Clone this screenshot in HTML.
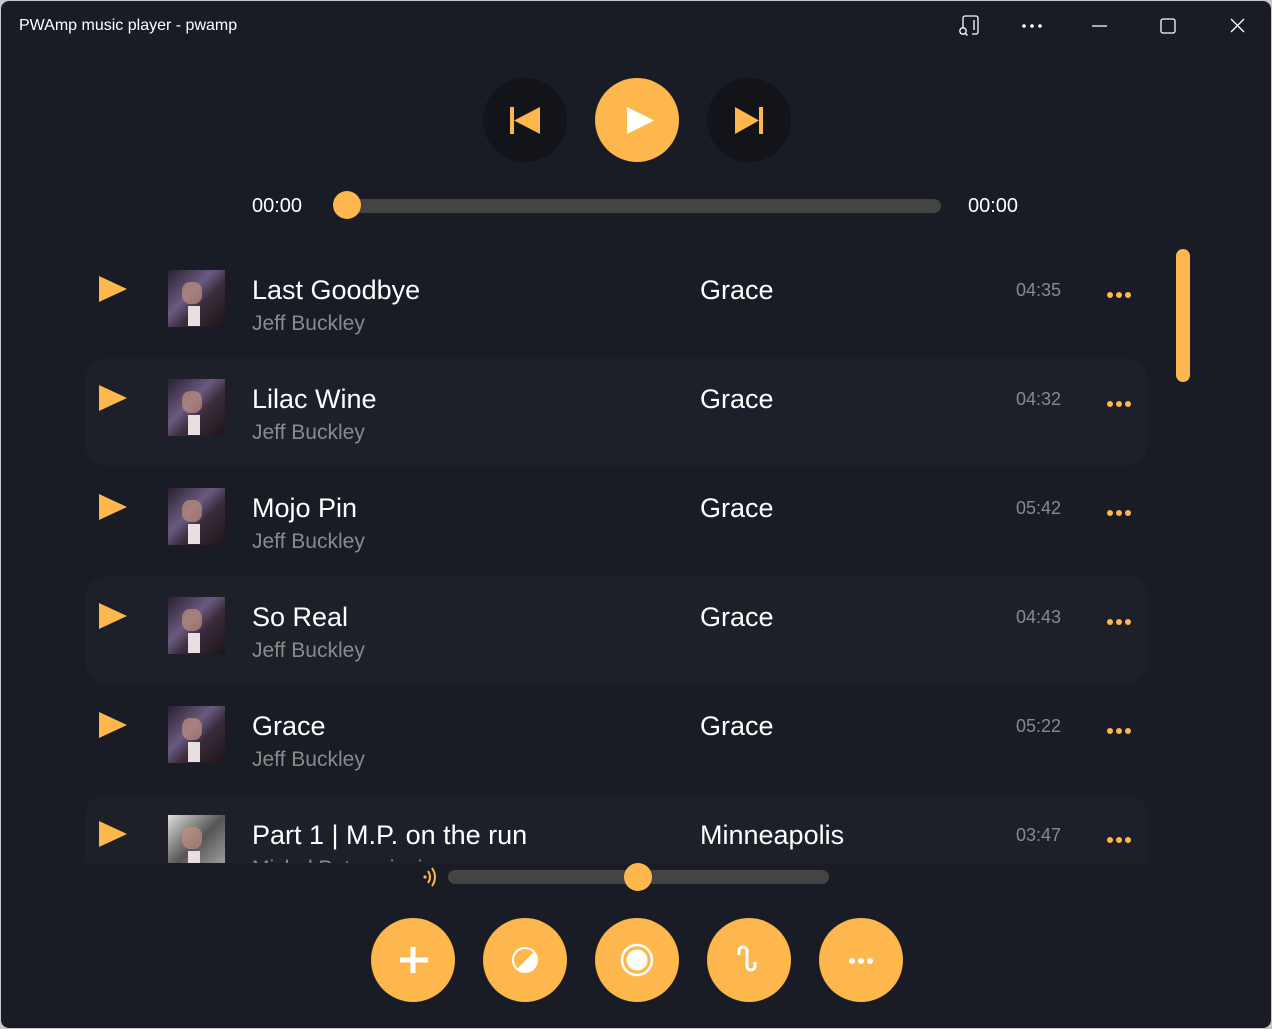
<!DOCTYPE html>
<html><head><meta charset="utf-8"><style>
*{margin:0;padding:0;box-sizing:border-box}
html,body{width:1272px;height:1029px;overflow:hidden;background:#c8c8c8}
body{font-family:"Liberation Sans",sans-serif;}
.win{position:absolute;left:1px;top:1px;width:1270px;height:1027px;background:#191c24;border-radius:8px;overflow:hidden}
.abs{position:absolute}
.title{left:18px;top:16px;color:#fff;font-size:16px}
.circ{position:absolute;border-radius:50%}
.time{position:absolute;color:#fff;font-size:20px;top:194px}
.list{position:absolute;left:0;top:248px;width:1270px;height:614px;overflow:hidden}
.row{position:absolute;left:84px;width:1063px;height:108px;border-radius:22px}
.row.alt{background:#1d2029}
.tri{position:absolute;left:14px;top:27px;width:0;height:0;border-left:28px solid #fdb74c;border-top:13px solid transparent;border-bottom:13px solid transparent}
.art{position:absolute;left:83px;top:21px;width:57px;height:57px;background:linear-gradient(135deg,#2a2030 0%,#6a5a80 40%,#3a2c3c 60%,#1e1418 100%)}
.art:before{content:"";position:absolute;left:14px;top:12px;width:20px;height:22px;border-radius:40%;background:#c09080;opacity:.7}
.art:after{content:"";position:absolute;left:20px;top:36px;width:12px;height:20px;background:#e8e0e0}
.name{position:absolute;left:167px;top:26px;color:#fff;font-size:27px}
.artist{position:absolute;left:167px;top:63px;color:#8a8a8a;font-size:21px}
.album{position:absolute;left:615px;top:26px;color:#fff;font-size:27px}
.dur{position:absolute;left:931px;top:31px;color:#8a8a8a;font-size:18px}
.dots{position:absolute;left:1022px;top:36px;}
.dots i{display:inline-block;width:6px;height:6px;border-radius:50%;background:#fdb74c;margin-right:3px}
</style></head><body><div class="win">
<div class="abs title">PWAmp music player - pwamp</div>
<svg class="abs" style="left:950px;top:10px" width="300" height="30" viewBox="950 10 300 30">
<g fill="none" stroke="#fff" stroke-width="1.3">
<path d="M962 27 V17 a2 2 0 0 1 2-2 H975 a2 2 0 0 1 2 2 V31 a2 2 0 0 1-2 2 H971"/>
<path d="M973 19 V29"/>
<circle cx="962" cy="30" r="3.2"/><path d="M964.5 32.5 L966.5 34.5"/>
<path d="M1091 25 H1106"/>
<rect x="1160" y="18" width="14" height="14" rx="2"/>
<path d="M1230 18 L1243 31 M1243 18 L1230 31"/>
</g>
<g fill="#fff"><circle cx="1023" cy="25" r="1.8"/><circle cx="1031" cy="25" r="1.8"/><circle cx="1039" cy="25" r="1.8"/></g>
</svg>
<div class="circ" style="left:482px;top:77px;width:84px;height:84px;background:#12141a"></div>
<div class="circ" style="left:594px;top:77px;width:84px;height:84px;background:#fdb74c"></div>
<div class="circ" style="left:706px;top:77px;width:84px;height:84px;background:#12141a"></div>
<svg class="abs" style="left:0;top:0" width="1270" height="240">
<rect x="509" y="106" width="4" height="27" fill="#fdb74c"/><path d="M513 119.5 L539 106 V133 Z" fill="#fdb74c"/>
<path d="M626 106 L653 119.5 L626 133 Z" fill="#fff"/>
<rect x="758" y="106" width="4" height="27" fill="#fdb74c"/><path d="M758 119.5 L734 106 V133 Z" fill="#fdb74c"/>
<rect x="333" y="198" width="607" height="14" rx="7" fill="#444"/>
<circle cx="346" cy="204" r="14" fill="#fdb74c"/>
</svg>
<div class="time" style="left:251px">00:00</div>
<div class="time" style="left:967px">00:00</div>
<div class="list">
<div class="row" style="top:0"><div class="tri"></div><div class="art"></div><div class="name">Last Goodbye</div><div class="artist">Jeff Buckley</div><div class="album">Grace</div><div class="dur">04:35</div><div class="dots"><i></i><i></i><i></i></div></div>
<div class="row alt" style="top:109px"><div class="tri"></div><div class="art"></div><div class="name">Lilac Wine</div><div class="artist">Jeff Buckley</div><div class="album">Grace</div><div class="dur">04:32</div><div class="dots"><i></i><i></i><i></i></div></div>
<div class="row" style="top:218px"><div class="tri"></div><div class="art"></div><div class="name">Mojo Pin</div><div class="artist">Jeff Buckley</div><div class="album">Grace</div><div class="dur">05:42</div><div class="dots"><i></i><i></i><i></i></div></div>
<div class="row alt" style="top:327px"><div class="tri"></div><div class="art"></div><div class="name">So Real</div><div class="artist">Jeff Buckley</div><div class="album">Grace</div><div class="dur">04:43</div><div class="dots"><i></i><i></i><i></i></div></div>
<div class="row" style="top:436px"><div class="tri"></div><div class="art"></div><div class="name">Grace</div><div class="artist">Jeff Buckley</div><div class="album">Grace</div><div class="dur">05:22</div><div class="dots"><i></i><i></i><i></i></div></div>
<div class="row alt" style="top:545px"><div class="tri"></div><div class="art" style="background:linear-gradient(135deg,#ddd,#555 50%,#aaa)"></div><div class="name">Part 1 | M.P. on the run</div><div class="artist">Michel Petrucciani</div><div class="album">Minneapolis</div><div class="dur">03:47</div><div class="dots"><i></i><i></i><i></i></div></div>
<div class="abs" style="left:1175px;top:0;width:14px;height:133px;border-radius:7px;background:#fdb74c"></div>
</div>
<svg class="abs" style="left:0;top:860px" width="1270" height="40">
<g fill="none" stroke="#fdb74c" stroke-width="2"><path d="M427 10 q4 6 0 12"/><path d="M431 7 q6 9 0 18"/></g>
<circle cx="424" cy="16" r="1.6" fill="#fdb74c"/>
<rect x="447" y="9" width="381" height="14" rx="7" fill="#444"/>
<circle cx="637" cy="16" r="14" fill="#fdb74c"/>
</svg>
<div class="circ" style="left:370px;top:917px;width:84px;height:84px;background:#fdb74c"></div>
<div class="circ" style="left:482px;top:917px;width:84px;height:84px;background:#fdb74c"></div>
<div class="circ" style="left:594px;top:917px;width:84px;height:84px;background:#fdb74c"></div>
<div class="circ" style="left:706px;top:917px;width:84px;height:84px;background:#fdb74c"></div>
<div class="circ" style="left:818px;top:917px;width:84px;height:84px;background:#fdb74c"></div>
<svg class="abs" style="left:0;top:920px" width="1270" height="80" viewBox="0 920 1270 80">
<path d="M399 959 H427 M412 946 V972" stroke="#fff" stroke-width="5"/>
<circle cx="524" cy="959" r="12" fill="none" stroke="#fff" stroke-width="2"/>
<path d="M533 951 A12 12 0 0 1 516 968 Z" fill="#fff"/>
<circle cx="636" cy="959" r="15" fill="none" stroke="#fff" stroke-width="2.5"/>
<circle cx="636" cy="959" r="10.5" fill="#fff"/>
<path d="M738 954 V950 a4 4 0 0 1 8 0 V965 a4 4 0 0 0 8 0 V961" fill="none" stroke="#fff" stroke-width="3"/>
<g fill="#fff"><circle cx="851" cy="960" r="3"/><circle cx="860" cy="960" r="3"/><circle cx="869" cy="960" r="3"/></g>
</svg>
</div></body></html>
